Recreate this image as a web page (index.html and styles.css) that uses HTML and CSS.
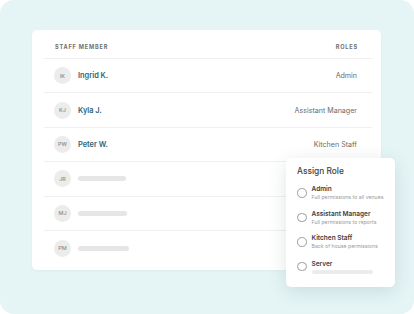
FILE: index.html
```html
<!DOCTYPE html>
<html lang="en">
<head>
    <meta charset="UTF-8">
    <meta name="viewport" content="width=device-width, initial-scale=1.0">
    <title>Staff Roles</title>
    <link rel="stylesheet" href="styles.css">
</head>
<body>
    <div class="stage">
        <div class="card">
            <div class="table">
                <div class="table-head">
                    <span>Staff Member</span>
                    <span>Roles</span>
                </div>
                <div class="row">
                    <div class="person"><span class="avatar">IK</span><span class="name">Ingrid K.</span></div>
                    <span class="role">Admin</span>
                </div>
                <div class="row">
                    <div class="person"><span class="avatar">KJ</span><span class="name">Kyla J.</span></div>
                    <span class="role">Assistant Manager</span>
                </div>
                <div class="row">
                    <div class="person"><span class="avatar">PW</span><span class="name">Peter W.</span></div>
                    <span class="role">Kitchen Staff</span>
                </div>
                <div class="row">
                    <div class="person"><span class="avatar">JR</span><span class="skeleton" style="width: 48px"></span></div>
                </div>
                <div class="row">
                    <div class="person"><span class="avatar">MJ</span><span class="skeleton" style="width: 49px"></span></div>
                </div>
                <div class="row">
                    <div class="person"><span class="avatar">PM</span><span class="skeleton" style="width: 51px"></span></div>
                </div>
            </div>
        </div>

        <!-- role picker popover -->
        <div class="popover">
            <h2>Assign Role</h2>
            <ul class="options">
                <li class="option">
                    <span class="radio"></span>
                    <div>
                        <div class="option-title">Admin</div>
                        <div class="option-desc">Full permissions to all venues</div>
                    </div>
                </li>
                <li class="option">
                    <span class="radio"></span>
                    <div>
                        <div class="option-title">Assistant Manager</div>
                        <div class="option-desc">Full permissions to reports</div>
                    </div>
                </li>
                <li class="option">
                    <span class="radio"></span>
                    <div>
                        <div class="option-title">Kitchen Staff</div>
                        <div class="option-desc">Back of house permissions</div>
                    </div>
                </li>
                <li class="option">
                    <span class="radio"></span>
                    <div>
                        <div class="option-title">Server</div>
                        <div class="option-bar"></div>
                    </div>
                </li>
            </ul>
        </div>
    </div>
</body>
</html>
```

FILE: styles.css
```css
body {
    margin: 0;
    background: #ffffff;
    font-family: Inter, "Noto Sans", sans-serif;
}
.stage {
    position: relative;
    width: 414px;
    height: 314px;
    box-sizing: border-box;
    padding: 30px 33px 44px 32px;
    background: #e5f5f6;
    border-radius: 14px;
}
.card {
    height: 240px;
    box-sizing: border-box;
    background: #ffffff;
    border-radius: 5px;
    box-shadow: 0 1px 3px rgba(0,0,0,0.04);
    padding: 0 9px 0 12px;
}
.table-head {
    display: flex;
    justify-content: space-between;
    align-items: center;
    height: 29px;
    box-sizing: border-box;
    padding: 6px 14px 0 11px;
    border-bottom: 1px solid #efefef;
    font-size: 5.6px;
    font-weight: 700;
    letter-spacing: 0.8px;
    text-transform: uppercase;
    color: #6f6f6f;
}
.row {
    display: flex;
    justify-content: space-between;
    align-items: center;
    height: 34.4px;
    box-sizing: border-box;
    padding: 0 15px 0 10px;
    border-bottom: 1px solid #f0f0f0;
}
.row:last-child {
    border-bottom: none;
}
.person {
    display: flex;
    align-items: center;
    gap: 7px;
}
.avatar {
    width: 17px;
    height: 17px;
    border-radius: 50%;
    background: #ececec;
    color: #8a8a8a;
    font-size: 5.4px;
    font-weight: 500;
    display: flex;
    align-items: center;
    justify-content: center;
}
.name {
    font-size: 7.4px;
    font-weight: 600;
    color: #2b6676;
}
.role {
    font-size: 7.1px;
    color: #6a6a6a;
}
.skeleton {
    height: 5px;
    border-radius: 3px;
    background: #e6e6e6;
}
.popover {
    position: absolute;
    left: 286px;
    top: 158px;
    width: 109px;
    height: 129px;
    box-sizing: border-box;
    padding: 7px 6px 0 11px;
    background: #ffffff;
    border-radius: 5px;
    box-shadow: 0 4px 18px rgba(40,70,75,0.14);
}
.popover h2 {
    margin: 0 0 8px;
    font-size: 8.4px;
    line-height: 12px;
    font-weight: 500;
    color: #404040;
}
.options {
    list-style: none;
    margin: 0;
    padding: 0;
    display: flex;
    flex-direction: column;
    gap: 8.5px;
}
.option {
    display: flex;
    align-items: center;
    gap: 5px;
    height: 16px;
}
.radio {
    width: 7.5px;
    height: 7.5px;
    border: 1px solid #9a9a9a;
    border-radius: 50%;
    flex-shrink: 0;
}
.option-title {
    font-size: 6.5px;
    line-height: 8px;
    font-weight: 600;
    color: #3d3d3d;
}
.option-desc {
    font-size: 5.2px;
    line-height: 8px;
    color: #9a9a9a;
    white-space: nowrap;
}
.option-bar {
    width: 61px;
    height: 4px;
    margin-top: 2px;
    border-radius: 2px;
    background: #ececec;
}
```
